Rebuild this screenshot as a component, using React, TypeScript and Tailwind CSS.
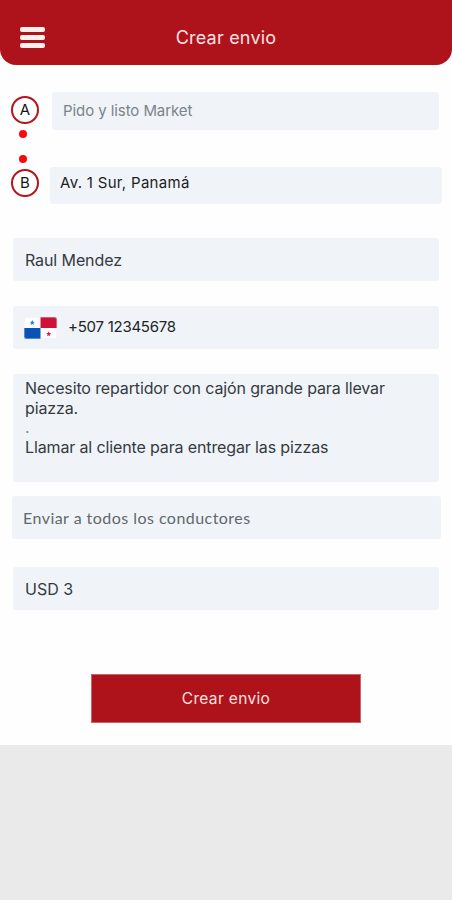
import type { ReactNode } from "react";

const field = "flex rounded-[3px] bg-[#f0f4f8] whitespace-nowrap";

function Stop({ children }: { children: ReactNode }) {
  return (
    <span className="flex size-7 shrink-0 items-center justify-center rounded-full border-2 border-[#b5141c] bg-white pb-px font-[Inter,sans-serif] text-[15px] leading-none text-[#151515]">
      {children}
    </span>
  );
}

function PanamaFlag() {
  return (
    <svg width="33" height="22" viewBox="0 0 33 22" className="shrink-0">
      <defs>
        <clipPath id="flag-shape"><rect width="33" height="22" rx="2.5" /></clipPath>
      </defs>
      <g clipPath="url(#flag-shape)">
        <rect width="33" height="22" fill="#fff" />
        <rect x="16.5" width="16.5" height="11" fill="#cf1037" />
        <rect y="11" width="16.5" height="11" fill="#0754b5" />
        <path d="M8.3 3.1 9 4.8l1.9.1-1.5 1.2.5 1.9-1.6-1-1.6 1 .5-1.9-1.5-1.2 1.9-.1z" fill="#1683d4" />
        <path d="m24.7 14.3.7 1.7 1.9.1-1.5 1.2.5 1.9-1.6-1-1.6 1 .5-1.9-1.5-1.2 1.9-.1z" fill="#df1239" />
      </g>
      <rect x=".25" y=".25" width="32.5" height="21.5" rx="2.5" fill="none" stroke="#dfe3e7" strokeWidth=".5" />
    </svg>
  );
}

export default function App() {
  return (
    <div className="flex h-[900px] w-[452px] flex-col overflow-hidden bg-[#eaeaea] font-[Inter,sans-serif] text-[#343a3f]">
      <main className="flex h-[745px] flex-col bg-[#fefefe]">
        <header className="grid h-[65px] shrink-0 grid-cols-[76px_1fr_76px] rounded-b-[16px] bg-[#ae131b] pt-[27px]">
          <button aria-label="Menú" className="ml-5 flex h-[21px] w-[25px] flex-col justify-between">
            <span className="h-[5px] w-full rounded-[2px] bg-[#fff0f0]" />
            <span className="h-[5px] w-full rounded-[2px] bg-[#fff0f0]" />
            <span className="h-[5px] w-full rounded-[2px] bg-[#fff0f0]" />
          </button>
          <h1 className="pt-px text-center text-[18px] leading-5 tracking-[0.2px] text-[#ffe1e1]">Crear envio</h1>
        </header>

        <section className="flex pt-[27px]">
          <div className="flex w-[50px] shrink-0 flex-col pl-[11px] pt-[4px]">
            <Stop>A</Stop>
            <span className="mt-[6px] ml-[8px] size-2 rounded-full bg-[#fa0710]" />
            <span className="mt-[17px] ml-[8px] size-2 rounded-full bg-[#fa0710]" />
            <span className="mt-[6px] flex"><Stop>B</Stop></span>
          </div>
          <div className="flex w-[392px] flex-col gap-[37px]">
            <div className={`${field} mr-[3px] ml-[2px] h-[38px] items-center pl-[11px] text-[15px] tracking-[-0.08px] text-[#7b838a]`}>
              Pido y listo Market
            </div>
            <div className={`${field} h-[37px] pt-[6px] pl-[10px] text-[15px] leading-5 tracking-[0.3px] text-[#1b1e22]`}>
              Av. 1 Sur, Panamá
            </div>
          </div>
        </section>

        <section className="flex flex-col pt-[34px] pr-[13px] pl-[13px]">
          <div className={`${field} h-[43px] items-center pl-[12px] text-[16px] tracking-[-0.1px]`}>Raul Mendez</div>
          <div className={`${field} mt-[25px] h-[43px] items-center gap-[11px] pl-[11px] text-[15px] tracking-[-0.25px] text-[#202428]`}>
            <PanamaFlag />
            <span>+507 12345678</span>
          </div>
          <div className={`${field} mt-[25px] h-[108px] flex-col pt-[5px] pl-[12px] text-[16px] leading-[19.5px] tracking-[-0.13px]`}>
            <span>Necesito repartidor con cajón grande para llevar</span>
            <span>piazza.</span>
            <span className="text-[#858a8e]">.</span>
            <span>Llamar al cliente para entregar las pizzas</span>
          </div>
          <div className={`${field} -mr-[2px] -ml-px mt-[14px] h-[43px] items-center pt-px pl-[11px] font-[Lato,sans-serif] text-[16px] tracking-[0.46px] text-[#62676b]`}>
            Enviar a todos los conductores
          </div>
          <div className={`${field} mt-[28px] h-[43px] items-center pl-[12px] text-[16px]`}>USD 3</div>
        </section>

        <button className="mx-auto mt-[64px] h-[49px] w-[270px] border border-[#c7656a] bg-[#ae131b] text-[15.5px] tracking-[0.35px] text-[#ffe1e1]">
          Crear envio
        </button>
      </main>
    </div>
  );
}
